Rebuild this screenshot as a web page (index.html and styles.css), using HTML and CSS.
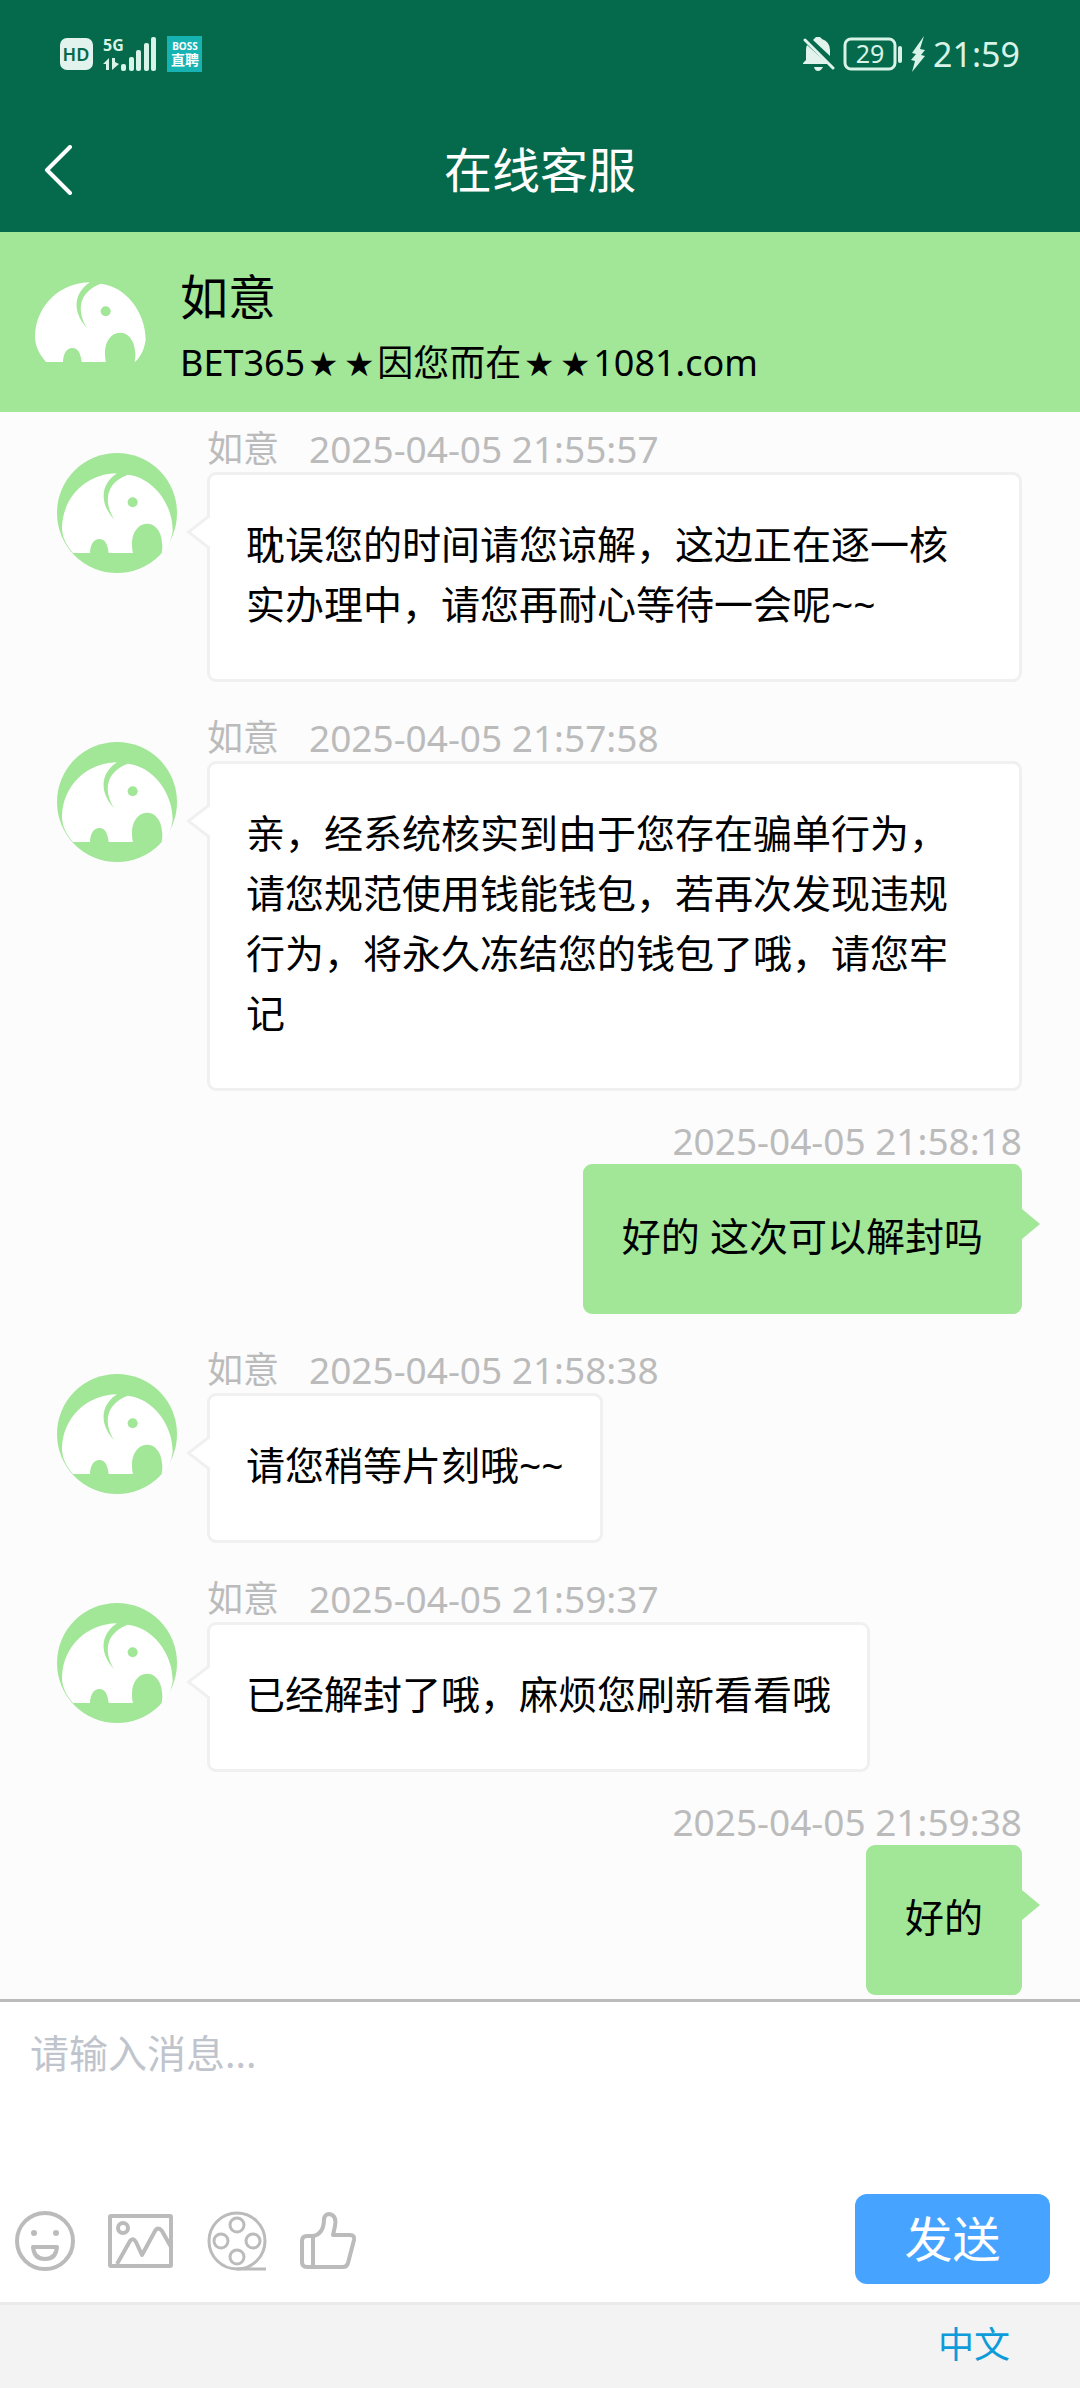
FILE: index.html
```html
<!DOCTYPE html>
<html lang="zh-CN">
<head>
    <meta charset="UTF-8">
    <meta name="viewport" content="width=device-width, initial-scale=1.0">
    <title>在线客服</title>
    <link rel="stylesheet" href="styles.css">
</head>
<body>
    <svg class="sprite" aria-hidden="true">
        <symbol id="elephant" viewBox="0 0 360 360">
            <circle cx="180" cy="180" r="180" fill="#a2e698"/>
            <path fill="#fff" d="M48 300C28 275 15 255 15 222C18 130 90 62 180 61C140 86 118 140 172 200C140 148 143 92 212 65C285 72 348 150 347 235C342 265 332 285 314 301C317 285 316 275 315 268C313 235 295 212 270 212C243 212 225 240 225 270C225 285 226 293 228 300L155 300C152 275 145 258 127 258C108 258 100 278 99 300Z"/>
            <circle cx="227" cy="148" r="15" fill="#a2e698"/>
        </symbol>
    </svg>

    <header class="top">
        <div class="status-bar">
            <div class="status-left">
                <svg width="33" height="34" viewBox="0 0 33 34">
                    <rect x="0" y="1" width="33" height="32" rx="7" fill="#e2f2ec"/>
                    <text x="16" y="24" text-anchor="middle" font-size="18" font-weight="600" fill="#05694b">HD</text>
                </svg>
                <svg width="54" height="48" viewBox="0 -6 54 48" fill="#d8f3e8">
                    <text x="0" y="15" font-size="16" font-weight="700">5G</text>
                    <path d="M0 28L6 22V34H3V28ZM9 22H12V26L16 28L9 34Z"/>
                    <rect x="18" y="28" width="5" height="7" rx="2"/>
                    <rect x="26" y="21" width="5" height="14" rx="2"/>
                    <rect x="33" y="14" width="5" height="21" rx="2"/>
                    <rect x="41" y="7" width="5" height="28" rx="2"/>
                    <rect x="48" y="1" width="5" height="34" rx="2"/>
                </svg>
                <svg width="35" height="36" viewBox="0 0 35 36">
                    <rect width="35" height="36" fill="#17b3b3"/>
                    <text x="18" y="14" text-anchor="middle" font-size="10" font-weight="700" fill="#fff">BOSS</text>
                    <text x="18" y="29" text-anchor="middle" font-size="14" font-weight="700" fill="#fff">直聘</text>
                </svg>
            </div>
            <div class="status-right">
                <svg width="32" height="36" viewBox="0 0 32 36" fill="#e2f2ec">
                    <path d="M4 9L25 28H0V27L3 24V14Q3 11 4 9ZM11 3Q12 2 13 1H17L19 3Q27 6 27 14V20L10 4Z"/>
                    <path d="M11 31H20Q18 35 15 35Q12 35 11 31Z"/>
                    <path d="M2 4L30 32" stroke="#e2f2ec" stroke-width="3" stroke-linecap="round"/>
                </svg>
                <svg width="60" height="34" viewBox="0 0 60 34">
                    <rect x="2" y="2" width="50" height="30" rx="6" fill="none" stroke="#d8f3e8" stroke-width="3"/>
                    <rect x="55" y="9" width="4" height="17" rx="2" fill="#d8f3e8"/>
                    <text x="27" y="26" text-anchor="middle" font-size="25" fill="#d8f3e8">29</text>
                </svg>
                <svg width="14" height="36" viewBox="0 0 14 36" fill="#d8f3e8">
                    <path d="M13 0L1 17L5 18L0 24L4 25L1 36L14 20L10 19L14 14L9 13Z"/>
                </svg>
                <time class="clock">21:59</time>
            </div>
        </div>
        <nav class="title-bar">
            <button class="back" type="button" aria-label="返回">
                <svg width="30" height="50" viewBox="0 0 30 50">
                    <path d="M28 2L5 25L28 48" fill="none" stroke="#fff" stroke-width="4" stroke-linecap="round" stroke-linejoin="round"/>
                </svg>
            </button>
            <h1>在线客服</h1>
        </nav>
    </header>

    <section class="agent">
        <svg class="avatar"><use href="#elephant"/></svg>
        <div class="agent-text">
            <h2>如意</h2>
            <p>BET365<span class="star">★</span><span class="star">★</span>因您而在<span class="star">★</span><span class="star">★</span>1081.com</p>
        </div>
    </section>

    <main class="chat">
        <article class="message">
            <svg class="avatar"><use href="#elephant"/></svg>
            <div class="content">
                <div class="meta"><span>如意</span><time>2025-04-05 21:55:57</time></div>
                <p class="bubble">耽误您的时间请您谅解，这边正在逐一核实办理中，请您再耐心等待一会呢~~</p>
            </div>
        </article>
        <article class="message">
            <svg class="avatar"><use href="#elephant"/></svg>
            <div class="content">
                <div class="meta"><span>如意</span><time>2025-04-05 21:57:58</time></div>
                <p class="bubble">亲，经系统核实到由于您存在骗单行为，请您规范使用钱能钱包，若再次发现违规行为，将永久冻结您的钱包了哦，请您牢记</p>
            </div>
        </article>
        <article class="message sent">
            <div class="content">
                <div class="meta"><time>2025-04-05 21:58:18</time></div>
                <p class="bubble">好的 这次可以解封吗</p>
            </div>
        </article>
        <article class="message">
            <svg class="avatar"><use href="#elephant"/></svg>
            <div class="content">
                <div class="meta"><span>如意</span><time>2025-04-05 21:58:38</time></div>
                <p class="bubble">请您稍等片刻哦~~</p>
            </div>
        </article>
        <article class="message">
            <svg class="avatar"><use href="#elephant"/></svg>
            <div class="content">
                <div class="meta"><span>如意</span><time>2025-04-05 21:59:37</time></div>
                <p class="bubble">已经解封了哦，麻烦您刷新看看哦</p>
            </div>
        </article>
        <article class="message sent">
            <div class="content">
                <div class="meta"><time>2025-04-05 21:59:38</time></div>
                <p class="bubble">好的</p>
            </div>
        </article>
    </main>

    <form class="composer">
        <textarea aria-label="消息" placeholder="请输入消息..."></textarea>
        <div class="toolbar">
            <button class="tool" type="button" aria-label="表情">
                <svg width="60" height="60" viewBox="0 0 60 60">
                    <circle cx="30" cy="30" r="28"/>
                    <path d="M18 36H42Q41 48 30 48Q19 48 18 36Z"/>
                    <circle class="dot" cx="19" cy="22" r="3"/>
                    <circle class="dot" cx="41" cy="22" r="3"/>
                </svg>
            </button>
            <button class="tool" type="button" aria-label="图片">
                <svg width="66" height="60" viewBox="0 0 66 60">
                    <rect x="2" y="5" width="61" height="50" rx="1"/>
                    <circle cx="15" cy="17" r="5"/>
                    <path d="M9 53L22 30Q25 26 28 31L34 44L47 20Q50 15 54 20L63 36"/>
                </svg>
            </button>
            <button class="tool" type="button" aria-label="视频">
                <svg class="thin" width="60" height="60" viewBox="0 0 60 60">
                    <circle cx="30" cy="30" r="28"/>
                    <path d="M30 58H59"/>
                    <circle cx="30" cy="14" r="7"/>
                    <circle cx="14" cy="30" r="7"/>
                    <circle cx="46" cy="30" r="7"/>
                    <circle cx="30" cy="46" r="7"/>
                </svg>
            </button>
            <button class="tool" type="button" aria-label="点赞">
                <svg width="58" height="60" viewBox="0 0 58 60">
                    <path d="M13 25H7Q2 25 2 30V51Q2 56 7 56H43Q47 56 48 52L54 29Q55 24 50 24H33L35 15Q37 4 29 3Q25 3 24 8Q24 23 13 25V56"/>
                </svg>
            </button>
            <button class="send" type="submit">发送</button>
        </div>
    </form>

    <footer class="language">
        <a href="#">中文</a>
    </footer>
</body>
</html>
```
FILE: styles.css
```css
* {
    box-sizing: border-box;
}
body {
    margin: 0;
    min-height: 100vh;
    display: flex;
    flex-direction: column;
    font-family: "Noto Sans", "Noto Sans CJK SC", sans-serif;
    background-color: #fcfcfc;
    color: #000;
}
h1, h2, p {
    margin: 0;
    font-weight: normal;
}
svg {
    display: block;
    flex-shrink: 0;
}
button {
    border: 0;
    padding: 0;
    background: none;
    font-family: inherit;
    cursor: pointer;
}
.sprite {
    position: absolute;
    width: 0;
    height: 0;
}

/* header */
.top {
    background-color: #05694b;
    color: #fff;
}
.status-bar {
    height: 108px;
    padding: 0 60px;
    display: flex;
    align-items: center;
    justify-content: space-between;
}
.status-left, .status-right {
    display: flex;
    align-items: center;
    gap: 10px;
}
.status-right {
    gap: 8px;
}
.clock {
    font-size: 34px;
    line-height: 36px;
    color: #d8f3e8;
}
.title-bar {
    height: 124px;
    padding: 0 42px;
    display: grid;
    grid-template-columns: 1fr auto 1fr;
    align-items: center;
}
.back {
    justify-self: start;
}
.title-bar h1 {
    font-size: 48px;
    line-height: 60px;
}

/* agent card */
.agent {
    display: flex;
    align-items: center;
    gap: 30px;
    height: 180px;
    padding: 0 30px;
    background-color: #a2e698;
}
.agent-text {
    padding-top: 10px;
}
.agent h2 {
    font-size: 48px;
    line-height: 72px;
}
.agent p {
    font-size: 36px;
    line-height: 60px;
}
.star {
    display: inline-block;
    width: 36px;
    font-family: "DejaVu Sans", sans-serif;
    font-size: 34px;
    text-align: center;
}
.avatar {
    width: 120px;
    height: 120px;
}

/* messages */
.chat {
    flex: 1;
    padding: 14px 58px 4px 57px;
}
.message {
    display: flex;
    gap: 30px;
}
.message + .message {
    margin-top: 33px;
}
.message + .sent {
    margin-top: 27px;
    justify-content: flex-end;
}
.message .avatar {
    margin-top: 27px;
}
.content {
    display: flex;
    flex-direction: column;
    align-items: flex-start;
}
.sent .content {
    align-items: flex-end;
}
.meta {
    display: flex;
    gap: 30px;
    font-size: 36px;
    line-height: 46px;
    color: #bbb;
}
.meta time {
    font-size: 37px;
}
.bubble {
    position: relative;
    padding: 39px 36px 45px;
    border: 3px solid #f0f0f0;
    border-radius: 9px;
    background-color: #fff;
    font-size: 39px;
    line-height: 60px;
}
.bubble::before, .bubble::after {
    content: "";
    position: absolute;
    top: 40px;
    left: -24px;
    border: 17px solid transparent;
    border-left: 0;
    border-right: 22px solid #f0f0f0;
}
.bubble::after {
    left: -19px;
    border-right-color: #fff;
}
.sent .bubble {
    border-color: #a2e698;
    background-color: #a2e698;
}
.sent .bubble::before {
    display: none;
}
.sent .bubble::after {
    top: 42px;
    left: auto;
    right: -21px;
    border: 15px solid transparent;
    border-right: 0;
    border-left: 18px solid #a2e698;
}

/* message box */
.composer {
    border-top: 3px solid #bbb;
    background-color: #fff;
}
.composer textarea {
    display: block;
    width: 100%;
    height: 192px;
    padding: 21px 30px;
    border: 0;
    outline: 0;
    resize: none;
    background: none;
    font-family: inherit;
    font-size: 39px;
    line-height: 60px;
}
.composer textarea::placeholder {
    color: #c0c4cc;
}
.toolbar {
    display: flex;
    align-items: center;
    gap: 33px;
    padding: 0 30px 18px 15px;
}
.tool {
    padding-top: 4px;
}
.tool svg {
    fill: none;
    stroke: #bbb;
    stroke-width: 4;
    stroke-linejoin: round;
}
.tool .thin {
    stroke-width: 3;
}
.tool .dot {
    fill: #bbb;
    stroke: none;
}
.send {
    width: 195px;
    height: 90px;
    margin-left: auto;
    border-radius: 12px;
    background-color: #46a3ff;
    color: #fff;
    font-size: 48px;
    line-height: 60px;
}

.language {
    padding: 10px 70px 13px;
    border-top: 3px solid #eaeaea;
    background-color: #f3f3f3;
    text-align: right;
    font-size: 36px;
    line-height: 60px;
}
.language a {
    color: #0e9bd9;
    text-decoration: none;
}
```
